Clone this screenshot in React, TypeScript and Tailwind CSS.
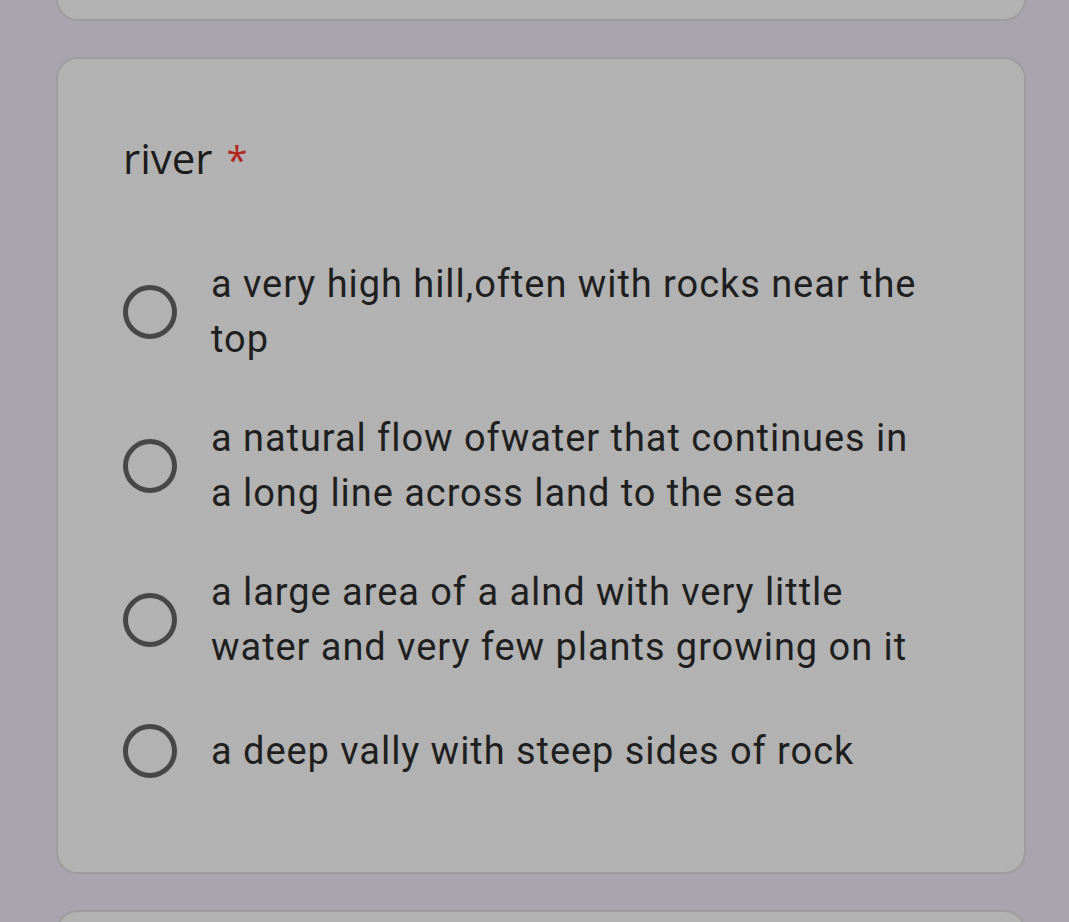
const options = [
  'a very high hill,often with rocks near the top',
  'a natural flow ofwater that continues in a long line across land to the sea',
  'a large area of a alnd with very little water and very few plants growing on it',
  'a deep vally with steep sides of rock',
];

function Radio() {
  return (
    <div className="w-[54px] h-[54px] shrink-0 rounded-full border-[5px] border-[#474747]" />
  );
}

export default function App() {
  return (
    <div
      className="w-[1069px] h-[922px] overflow-hidden bg-[#a7a4ae] flex flex-col items-start pl-[56px] gap-[36px]"
      style={{ fontFamily: 'Roboto, "Liberation Sans", sans-serif' }}
    >
      {/* previous question, mostly scrolled off */}
      <div className="w-[970px] h-[221px] mt-[-200px] shrink-0 rounded-[22px] bg-[#b2b2b2] border-2 border-[#9d9c9f]" />

      <div className="w-[970px] h-[817px] shrink-0 rounded-[22px] bg-[#b2b2b2] border-2 border-[#9d9c9f] pl-[65px] pr-[40px] pt-[74px]">
        <div
          className="text-[42px] leading-[50px] text-[#1c1c1c]"
          style={{ fontFamily: '"Open Sans", Roboto, sans-serif' }}
        >
          river<span className="text-[#b3261e] text-[38px] ml-[14px]">*</span>
        </div>

        <div className="mt-[73px] flex flex-col gap-[44px]">
          {options.map((o) => (
            <div key={o} className="flex items-center min-h-[64px] gap-[34px]">
              <Radio />
              <div className="text-[38px] leading-[55px] text-[#1f1f1f] tracking-[0.95px] w-[712px]">
                {o}
              </div>
            </div>
          ))}
        </div>
      </div>

      <div className="w-[970px] h-[200px] shrink-0 rounded-[22px] bg-[#b2b2b2] border-2 border-[#9d9c9f]" />
    </div>
  );
}
